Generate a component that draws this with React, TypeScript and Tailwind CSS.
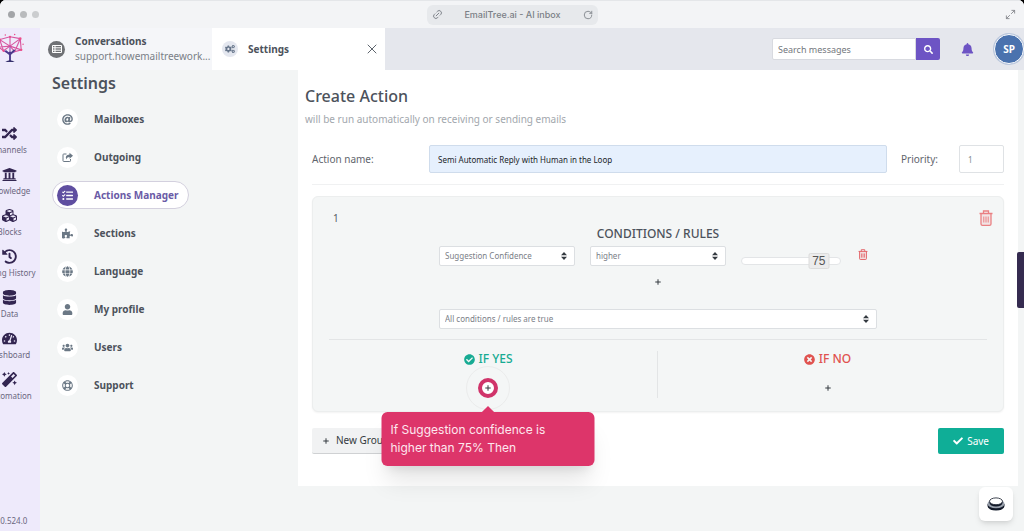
import { useState } from 'react';
import type { ReactNode } from 'react';
import {
  FaAt,
  FaBell,
  FaCheck,
  FaCheckCircle,
  FaCogs,
  FaCubes,
  FaDatabase,
  FaGlobe,
  FaHistory,
  FaMagic,
  FaPuzzlePiece,
  FaRandom,
  FaRegLifeRing,
  FaSearch,
  FaTachometerAlt,
  FaTasks,
  FaTimesCircle,
  FaUniversity,
  FaUser,
  FaUsers,
} from 'react-icons/fa';
import { Link2, Maximize2, Plus, RotateCw, X } from 'lucide-react';

const railItems = [
  { label: 'Channels', icon: FaRandom },
  { label: 'Knowledge', icon: FaUniversity },
  { label: 'Blocks', icon: FaCubes },
  { label: 'Billing History', icon: FaHistory },
  { label: 'Data', icon: FaDatabase },
  { label: 'Dashboard', icon: FaTachometerAlt },
  { label: 'Automation', icon: FaMagic },
];

const settingsItems = [
  { label: 'Mailboxes', icon: FaAt },
  { label: 'Outgoing', icon: OutgoingIcon },
  { label: 'Actions Manager', icon: FaTasks },
  { label: 'Sections', icon: FaPuzzlePiece },
  { label: 'Language', icon: FaGlobe },
  { label: 'My profile', icon: FaUser },
  { label: 'Users', icon: FaUsers },
  { label: 'Support', icon: FaRegLifeRing },
];

function OutgoingIcon({ className }: { className?: string }) {
  return (
    <svg viewBox="0 0 22 20" className={className} fill="none" aria-hidden="true">
      <path d="M9 3 H3.5 Q2 3 2 4.5 V16.5 Q2 18 3.5 18 H15.5 Q17 18 17 16.5 V13" stroke="currentColor" strokeWidth="2" />
      <path d="M15 0.5 L22 6.5 L15 12.5 V9 Q9.5 8.5 8.5 14 Q5 5 15 4 Z" fill="currentColor" />
    </svg>
  );
}

function TreeLogo() {
  return (
    <svg viewBox="0 0 30 32" className="h-[30px] w-7" fill="none" aria-hidden="true">
      <g stroke="#d8559f" strokeWidth="1.2" strokeLinejoin="round">
        <path d="M4 7 L15 4 L26 6 L27 18 L20 20 L15 14 L8 19 L3 15 Z" />
        <path d="M4 7 L15 14 L26 6 M15 4 L15 14 L27 18 M3 15 L15 14 M4 7 L8 19 M26 6 L20 20" />
      </g>
      <g stroke="#9a4cb0" strokeWidth="1.2">
        <path d="M8 19 L15 22 L20 20 M15 14 L15 22" />
      </g>
      <path d="M10 19 L15 23 L20 18 M15 20 V30" stroke="#4b3a8c" strokeWidth="2" />
      <path d="M10 31 Q15 27 20 31 Z" fill="#35306b" />
      <g fill="#ec4f8b">
        <circle cx="4" cy="7" r="1.3" />
        <circle cx="26" cy="6" r="1.4" />
        <circle cx="27" cy="18" r="1.3" />
        <circle cx="15" cy="4" r="1.2" />
        <circle cx="10" cy="2" r="0.8" />
        <circle cx="20" cy="1.5" r="0.8" />
        <circle cx="29" cy="12" r="0.8" />
        <circle cx="8" cy="19" r="1.2" />
      </g>
    </svg>
  );
}

function TrashIcon({ className }: { className?: string }) {
  return (
    <svg viewBox="0 0 14 16" className={className} fill="none" stroke="currentColor" strokeWidth="1.3" aria-hidden="true">
      <path d="M0.5 3.5 H13.5 M4.5 3.5 V1 H9.5 V3.5" />
      <path d="M2 3.5 V14 Q2 15.3 3.5 15.3 H10.5 Q12 15.3 12 14 V3.5" fill="currentColor" fillOpacity="0.15" />
      <path d="M4.8 6.5 V12.5 M7 6.5 V12.5 M9.2 6.5 V12.5" strokeWidth="1" />
    </svg>
  );
}

function SelectBox({ label, options }: { label: string; options: string[] }) {
  const [value, setValue] = useState(options[0]);

  return (
    <div className="relative">
      <select
        aria-label={label}
        value={value}
        onChange={(e) => setValue(e.target.value)}
        className="block h-5 w-full appearance-none rounded-xs border border-[#dcdfe2] bg-white pl-[5px] pr-5 text-[8px] leading-[18px] text-[#7b8087] outline-none"
      >
        {options.map((option) => (
          <option key={option}>{option}</option>
        ))}
      </select>
      <svg viewBox="0 0 6 8" className="pointer-events-none absolute right-2 top-1.5 h-2 w-1.5 fill-[#343a40]" aria-hidden="true">
        <path d="M3 0 L6 3.3 H0 Z M3 8 L0 4.7 H6 Z" />
      </svg>
    </div>
  );
}

function ConfidenceSlider() {
  const [value, setValue] = useState(75);

  return (
    <div className="relative mt-[11px] h-2">
      <input
        type="range"
        aria-label="Confidence"
        min={0}
        max={100}
        value={value}
        onChange={(e) => setValue(Number(e.target.value))}
        className="block h-2 w-full appearance-none rounded-sm border border-[#e3e5e7] bg-white outline-none [&::-webkit-slider-thumb]:h-4 [&::-webkit-slider-thumb]:w-5 [&::-webkit-slider-thumb]:appearance-none [&::-webkit-slider-thumb]:bg-transparent"
      />
      {/* Value sits on the thumb */}
      <span
        className="pointer-events-none absolute top-1/2 flex h-4 w-[21px] -translate-x-1/2 -translate-y-1/2 items-center justify-center rounded-xs border border-[#dcdcdc] bg-[#ececec] font-['Liberation_Sans'] text-xs text-[#555]"
        style={{ left: `calc(${value}% + ${(50 - value) / 8}px + 6px)` }}
      >
        {value}
      </span>
    </div>
  );
}

function AddButton({ label }: { label: string }) {
  return (
    <button type="button" aria-label={label} className="flex size-4 items-center justify-center text-[#343a40]">
      <Plus className="size-2" strokeWidth={3} />
    </button>
  );
}

function BranchTitle({ className, children }: { className: string; children: ReactNode }) {
  return <h3 className={`flex items-center gap-1 text-xs leading-4 font-medium ${className}`}>{children}</h3>;
}

function TitleBar() {
  return (
    <div className="flex h-7 shrink-0 items-center border-t border-[#e4e6e9] bg-[#f3f4f6] px-2 font-['Inter',sans-serif]">
      <div className="flex flex-1 gap-[5px]">
        <span className="size-[7px] rounded-full bg-[#a3a5a8]" />
        <span className="size-[7px] rounded-full bg-[#b9bbbd]" />
        <span className="size-[7px] rounded-full bg-[#cbcdcf]" />
      </div>
      <div className="flex h-5 w-[171px] items-center justify-between rounded-md bg-[#e7e9ec] px-[5px] text-[9px] font-medium text-[#7b7f86]">
        <Link2 className="size-[11px] -rotate-45" />
        <span>EmailTree.ai - AI inbox</span>
        <RotateCw className="size-[10px]" />
      </div>
      <div className="flex flex-1 justify-end">
        <Maximize2 className="size-[11px] text-[#85888d]" />
      </div>
    </div>
  );
}

function Rail() {
  return (
    <nav aria-label="Main" className="flex w-10 shrink-0 justify-end overflow-hidden bg-[#eeeafb] text-[#332651]">
      <div className="flex w-[61px] shrink-0 flex-col items-center">
        <a href="#home" aria-label="Home" className="mt-[5px] flex h-[93px] items-start">
          <TreeLogo />
        </a>
        {railItems.map(({ label, icon: Icon }) => (
          <a key={label} href="#rail" className="flex h-[41px] flex-col items-center">
            <Icon className="size-[15px]" />
            <span className="text-[8px] leading-[18px] whitespace-nowrap text-[#6b6780]">{label}</span>
          </a>
        ))}
        <span className="mt-auto pb-[3px] text-[8px] leading-[14px] text-[#6b6780]">v10.524.0</span>
      </div>
    </nav>
  );
}

function Header() {
  return (
    <header className="flex h-[42px] shrink-0 items-stretch bg-[#e5e7ed]">
      <div className="flex w-[172px] items-center gap-2.5 bg-[#f5f6f9] pl-2">
        <span className="flex size-[17px] shrink-0 items-center justify-center rounded-full bg-[#6f7175]">
          <svg viewBox="0 0 10 8" className="h-2 w-2.5" fill="none" stroke="#fff" aria-hidden="true">
            <path d="M0.5 0.5 H9.5 V7.5 H0.5 Z M0.5 2.8 H9.5 M0.5 5.2 H9.5 M3 0.5 V7.5" />
          </svg>
        </span>
        <a href="#conversations" className="text-[10px] leading-[15px] text-[#7a8087]">
          <strong className="block font-bold text-[#4c525b]">Conversations</strong>
          support.howemailtreework...
        </a>
      </div>
      <div className="flex w-[173px] items-center bg-white pr-[5px] pl-2.5">
        <span className="flex size-4 shrink-0 items-center justify-center rounded-full bg-[#e4e7ef]">
          <FaCogs className="size-2.5 text-[#66758a]" />
        </span>
        <a href="#settings" className="ml-2.5 flex-1 text-[10px] font-bold text-[#4c525b]">Settings</a>
        <button type="button" aria-label="Close tab" className="text-[#5d646d]">
          <X className="size-4" strokeWidth={1.5} />
        </button>
      </div>
      <div className="ml-auto flex items-center">
        <form className="flex" onSubmit={(e) => e.preventDefault()}>
          <input
            type="search"
            aria-label="Search messages"
            placeholder="Search messages"
            className="h-[22px] w-[144px] rounded-l-xs border border-[#d8dae0] bg-white px-[5px] text-[9px] outline-none placeholder:text-[#73777d]"
          />
          <button type="submit" aria-label="Search" className="flex h-[22px] w-6 items-center justify-center rounded-r-xs bg-[#6d54c4] text-white">
            <FaSearch className="size-[9px]" />
          </button>
        </form>
        <button type="button" aria-label="Notifications" className="ml-[21px] text-[#6d54c4]">
          <FaBell className="size-[13px]" />
        </button>
        <button
          type="button"
          className="ml-5 flex size-[30px] items-center justify-center rounded-full border border-white bg-[#4a72ae] text-[10px] font-bold text-white ring-1 ring-[#b9c6dc]"
        >
          SP
        </button>
      </div>
    </header>
  );
}

function SettingsMenu() {
  const [active, setActive] = useState('Actions Manager');

  return (
    <aside className="w-[258px] shrink-0 px-3 pt-1">
      <h2 className="text-base leading-[18px] font-semibold text-[#4c525b]">Settings</h2>
      <ul className="mt-[13px] flex flex-col gap-2.5">
        {settingsItems.map(({ label, icon: Icon }) => (
          <li key={label}>
            <button
              type="button"
              onClick={() => setActive(label)}
              className={`flex h-7 items-center gap-4 rounded-full border pr-2.5 pl-1 text-[10px] font-bold ${
                active === label
                  ? 'border-[#d3d0de] bg-white text-[#6a5ba6]'
                  : 'border-transparent text-[#4c525b]'
              }`}
            >
              <span
                className={`flex size-[21px] items-center justify-center rounded-full ${
                  active === label ? 'bg-[#5f4ea0] text-white' : 'bg-white text-[#6b7885]'
                }`}
              >
                <Icon className="size-[11px]" />
              </span>
              {label}
            </button>
          </li>
        ))}
      </ul>
    </aside>
  );
}

function ConditionGroup() {
  return (
    <section className="mt-[11px] rounded-md border border-[#eceeee] bg-[#f4f6f6] px-1.5 pt-[13px] pb-[13px] shadow-xs">
      <div className="flex items-start justify-between pr-1 pl-3.5">
        <span className="text-[10px] leading-4 text-[#555b62]">1</span>
        <button type="button" aria-label="Delete group" className="text-[#ea8083]">
          <TrashIcon className="h-4 w-3.5" />
        </button>
      </div>

      <div className="mx-auto w-[438px]">
        <h3 className="text-center text-xs leading-4 font-medium text-[#4c525b]">CONDITIONS / RULES</h3>
        <div className="mt-1 grid grid-cols-[136px_136px_100px_auto] gap-[15px]">
          <SelectBox label="Condition" options={['Suggestion Confidence', 'Language', 'Mailbox']} />
          <SelectBox label="Comparison" options={['higher', 'lower', 'equal']} />
          <ConfidenceSlider />
          <button type="button" aria-label="Delete condition" className="ml-0.5 self-start pt-[3px] text-[#e25b60]">
            <TrashIcon className="h-[11px] w-[10px]" />
          </button>
        </div>
        <div className="mt-2 flex justify-center">
          <AddButton label="Add condition" />
        </div>
        <div className="mt-[19px]">
          <SelectBox label="Match" options={['All conditions / rules are true', 'Any condition / rule is true']} />
        </div>
      </div>

      <hr className="mx-2.5 mt-2.5 border-[#e3e5e6]" />
      <div className="mt-[11px] grid grid-cols-2">
        <div className="flex h-[47px] flex-col items-center border-r border-[#e3e5e6]">
          <BranchTitle className="text-[#17ab93]">
            <FaCheckCircle className="size-[11px]" />
            IF YES
          </BranchTitle>
          <div className="relative z-10 mt-[13px] flex size-4 items-center justify-center">
            <span className="absolute size-11 rounded-full border border-[#ebecec]" />
            <span className="absolute size-5 rounded-full border-4 border-[#d0346a] bg-white" />
            <div className="relative">
              <AddButton label="Add action when yes" />
            </div>
            <span className="absolute top-7 size-2.5 rotate-45 bg-[#dd356a]" />
            <div
              role="tooltip"
              className="absolute top-8 left-1/2 w-[213px] -translate-x-1/2 rounded-md bg-[#dd356a] px-[9px] py-[9px] font-['Inter',sans-serif] text-xs leading-[18px] text-[#fde7ee] shadow-xl"
            >
              <p className="w-44">If Suggestion confidence is higher than 75% Then</p>
            </div>
          </div>
        </div>
        <div className="flex flex-col items-center">
          <BranchTitle className="text-[#e0524f]">
            <FaTimesCircle className="size-[11px]" />
            IF NO
          </BranchTitle>
          <div className="mt-[13px]">
            <AddButton label="Add action when no" />
          </div>
        </div>
      </div>
    </section>
  );
}

function CreateAction() {
  const [name, setName] = useState('Semi Automatic Reply with Human in the Loop');
  const [priority, setPriority] = useState('1');

  return (
    <main className="mr-1.5 flex-1 self-start bg-white px-[7px] pt-4 pb-8">
      <h1 className="text-base leading-5 font-medium text-[#4c525b]">Create Action</h1>
      <p className="mt-[5px] text-[10px] leading-4 text-[#a2a7ad]">will be run automatically on receiving or sending emails</p>

      <div className="px-[7px]">
        <div className="mt-[18px] flex items-center border-b border-[#f0f1f2] pb-[11px] text-[10px] text-[#5f656d]">
          <label htmlFor="action-name" className="w-[117px]">Action name:</label>
          <input
            id="action-name"
            type="text"
            value={name}
            onChange={(e) => setName(e.target.value)}
            className="h-7 min-w-0 flex-1 rounded-xs border border-[#cfdcec] bg-[#e6f0fd] px-2 text-[8px] text-[#212529] outline-none"
          />
          <label htmlFor="priority" className="ml-3.5 w-[58px]">Priority:</label>
          <input
            id="priority"
            type="text"
            value={priority}
            onChange={(e) => setPriority(e.target.value)}
            className="h-7 w-[45px] rounded-xs border border-[#dfe2e5] bg-white px-2 text-[8px] text-[#868b91] outline-none"
          />
        </div>

        <ConditionGroup />

        <div className="mt-4 flex items-center justify-between">
          <button type="button" className="flex h-[26px] items-center gap-1.5 rounded-xs border-b border-[#cfd1d3] bg-[#f1f2f3] px-2.5 text-[10px] text-[#343a40]">
            <Plus className="size-2" strokeWidth={3} />
            New Group
          </button>
          <button type="button" className="flex h-[26px] items-center gap-1 rounded-xs bg-[#0fae97] px-[15px] text-[10px] text-white">
            <FaCheck className="size-2.5" />
            Save
          </button>
        </div>
      </div>
    </main>
  );
}

export default function App() {
  return (
    <div className="bg-black">
      <div className="relative flex min-h-screen flex-col overflow-hidden rounded-t-md bg-[#f3f5f5] font-['Noto_Sans','Open_Sans',sans-serif]">
        <TitleBar />
        <div className="flex flex-1">
          <Rail />
          <div className="flex min-w-0 flex-1 flex-col">
            <Header />
            <div className="flex flex-1">
              <SettingsMenu />
              <CreateAction />
            </div>
          </div>
        </div>

        {/* Feedback tab */}
        <button type="button" aria-label="Open side panel" className="absolute top-[252px] right-0 h-14 w-[7px] rounded-l-xs bg-[#352b50]" />

        {/* Chat launcher */}
        <button
          type="button"
          aria-label="Open launcher"
          className="absolute right-[11px] bottom-2.5 flex size-[34px] items-center justify-center rounded-md bg-white shadow-md"
        >
          <svg viewBox="0 0 18 14" className="h-3.5 w-[18px]" aria-hidden="true">
            <path d="M0.5 7 V9 A8.5 4.6 0 0 0 17.5 9 V7 Z" fill="#111827" />
            <ellipse cx="9" cy="6.8" rx="8.5" ry="4.5" fill="#9aa1ad" />
            <path d="M2.5 4.5 V6 A6.5 3.5 0 0 0 15.5 6 V4.5 Z" fill="#111827" />
            <ellipse cx="9" cy="4.3" rx="6.5" ry="3.4" fill="#fff" stroke="#111827" strokeWidth="0.8" />
          </svg>
        </button>
      </div>
    </div>
  );
}
